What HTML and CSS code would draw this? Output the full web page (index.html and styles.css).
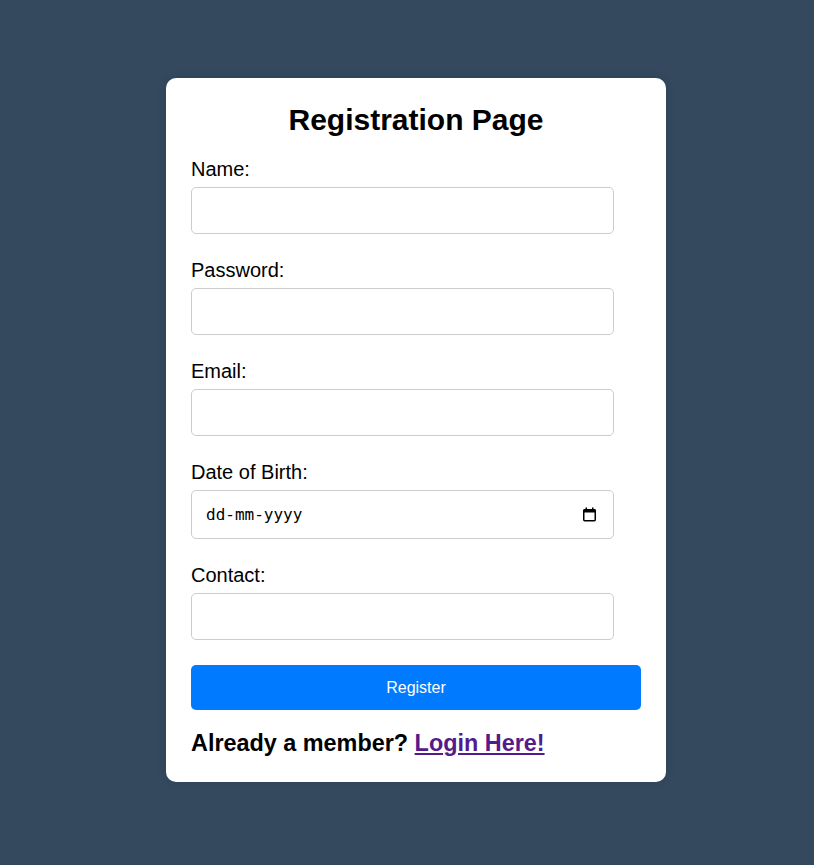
FILE: index.html
```html
<!DOCTYPE html>
<html lang="en">
<head>
<meta charset="utf-8">
<title>Registration Page</title>
<link rel="stylesheet" href="styles.css">
</head>
<body>
<div class="page">
  <form class="card">
    <h2 class="title">Registration Page</h2>
    <div class="field">
      <label class="label" for="name">Name:</label>
      <input class="input" id="name" type="text">
    </div>
    <div class="field">
      <label class="label" for="password">Password:</label>
      <input class="input" id="password" type="password">
    </div>
    <div class="field">
      <label class="label" for="email">Email:</label>
      <input class="input" id="email" type="email">
    </div>
    <div class="field">
      <label class="label" for="dob">Date of Birth:</label>
      <div class="date-wrap">
        <input class="input input-date" id="dob" type="text" placeholder="dd-mm-yyyy">
        <svg class="cal-icon" width="15" height="15" viewBox="0 0 15 15" aria-hidden="true">
          <rect x="1.75" y="2.75" width="11.5" height="11" rx="1" ry="1" fill="none" stroke="#000" stroke-width="1.5"/>
          <rect x="1.5" y="2.5" width="12" height="3" fill="#000"/>
          <rect x="3.5" y="0.5" width="1.5" height="3" fill="#000"/>
          <rect x="10" y="0.5" width="1.5" height="3" fill="#000"/>
        </svg>
      </div>
    </div>
    <div class="field">
      <label class="label" for="contact">Contact:</label>
      <input class="input" id="contact" type="text">
    </div>
    <button class="btn" type="button">Register</button>
    <h3 class="member">Already a member? <a class="login" href="#">Login Here!</a></h3>
  </form>
</div>
</body>
</html>
```
FILE: styles.css
```css
html, body {
  margin: 0;
  padding: 0;
}
body {
  background: #34495e;
  font-family: "Liberation Sans", Arial, sans-serif;
  font-size: 20px;
  color: #000;
}
.page {
  display: flex;
  justify-content: center;
  padding: 78px 0 0 18px;
  min-height: 865px;
  box-sizing: border-box;
}
.card {
  width: 450px;
  padding: 25px;
  background: #fff;
  border-radius: 10px;
  box-shadow: 0 0 10px rgba(0, 0, 0, 0.1);
  align-self: flex-start;
}
.title {
  margin: 0 0 21px;
  font-size: 30px;
  line-height: 34px;
  font-weight: bold;
  text-align: center;
}
.field {
  margin-bottom: 25px;
}
.label {
  display: block;
  font-size: 20px;
  line-height: 23px;
  margin-bottom: 6px;
}
.input {
  display: block;
  width: 423px;
  height: 47px;
  box-sizing: border-box;
  padding: 0 12px;
  border: 1px solid #ccc;
  border-radius: 5px;
  font-size: 16px;
  font-family: "Liberation Sans", Arial, sans-serif;
  background: #fff;
  color: #000;
  margin: 0;
  outline: none;
}
.date-wrap {
  position: relative;
  width: 423px;
}
.input-date {
  height: 49px;
  font-family: "DejaVu Sans Mono", monospace;
  padding: 0 40px 0 14px;
}
.input-date::placeholder {
  color: #000;
  opacity: 1;
}
.cal-icon {
  position: absolute;
  top: 17px;
  right: 17px;
}
.btn {
  display: block;
  width: 450px;
  height: 45px;
  margin: 0;
  border: none;
  border-radius: 5px;
  background: #007bff;
  color: #fff;
  font-family: "Liberation Sans", Arial, sans-serif;
  font-size: 16px;
  cursor: pointer;
}
.member {
  margin: 20px 0 0;
  font-size: 23.4px;
  line-height: 27px;
  font-weight: bold;
}
.login {
  color: #551a8b;
  text-decoration: underline;
}
```
